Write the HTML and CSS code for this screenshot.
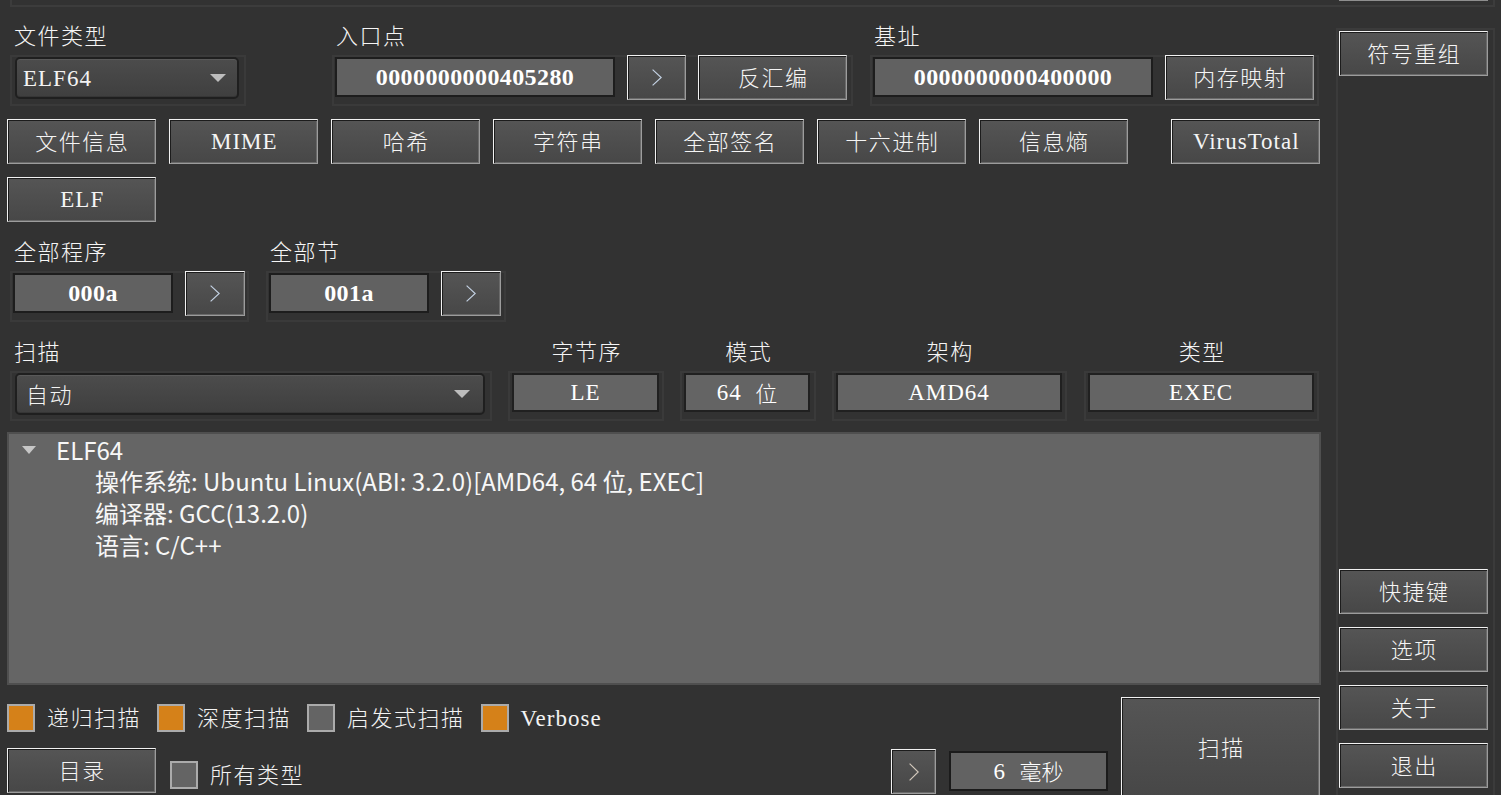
FILE: index.html
```html
<!DOCTYPE html>
<html lang="zh-CN">
<head>
<meta charset="utf-8">
<title>Detect It Easy</title>
<link rel="stylesheet" href="styles.css">
</head>
<body>
<div class="app">
  <div class="topstrip"><div class="topstrip-btn"></div></div>
  <div class="content">
    <div class="main">
      <!-- Row A -->
      <div class="row row-a">
        <div class="group g-type">
          <div class="label">文件类型</div>
          <div class="frame pad3">
            <div class="combo w224">
              <span class="lat">ELF64</span>
              <svg class="combo-arrow" width="16" height="8" viewBox="0 0 16 8"><polygon points="0,0 16,0 8,8" fill="#bdbdbd"/></svg>
            </div>
          </div>
        </div>
        <div class="group g-entry">
          <div class="label">入口点</div>
          <div class="frame pad1">
            <div class="field hex w280 h40">0000000000405280</div>
            <div class="btn w59 up">
              <svg class="chev" width="10" height="17" viewBox="0 0 10 17"><polyline points="0.6,0.6 9.2,8.5 0.6,16.4" fill="none" stroke="#c4d2e4" stroke-width="1.2"/></svg>
            </div>
            <div class="btn up">反汇编</div>
          </div>
        </div>
        <div class="group g-base">
          <div class="label">基址</div>
          <div class="frame pad1">
            <div class="field hex w280 h40">0000000000400000</div>
            <div class="btn up">内存映射</div>
          </div>
        </div>
      </div>

      <!-- Row B -->
      <div class="row row-b">
        <div class="btn">文件信息</div>
        <div class="btn"><span class="lat">MIME</span></div>
        <div class="btn">哈希</div>
        <div class="btn">字符串</div>
        <div class="btn">全部签名</div>
        <div class="btn">十六进制</div>
        <div class="btn">信息熵</div>
        <div class="btn vt"><span class="lat">VirusTotal</span></div>
      </div>

      <!-- Row C -->
      <div class="row row-c">
        <div class="btn"><span class="lat">ELF</span></div>
      </div>

      <!-- Row D -->
      <div class="row row-d">
        <div class="group g-prog">
          <div class="label">全部程序</div>
          <div class="frame pad1">
            <div class="field hex w160 h40">000a</div>
            <div class="btn w60 up">
              <svg class="chev" width="10" height="17" viewBox="0 0 10 17"><polyline points="0.6,0.6 9.2,8.5 0.6,16.4" fill="none" stroke="#c4d2e4" stroke-width="1.2"/></svg>
            </div>
          </div>
        </div>
        <div class="group g-sect">
          <div class="label">全部节</div>
          <div class="frame pad1">
            <div class="field hex w160 h40">001a</div>
            <div class="btn w60 up">
              <svg class="chev" width="10" height="17" viewBox="0 0 10 17"><polyline points="0.6,0.6 9.2,8.5 0.6,16.4" fill="none" stroke="#c4d2e4" stroke-width="1.2"/></svg>
            </div>
          </div>
        </div>
      </div>

      <!-- Row E -->
      <div class="row row-e">
        <div class="group g-scan">
          <div class="label">扫描</div>
          <div class="frame f50 pad3">
            <div class="combo w470">
              <span class="cjk">自动</span>
              <svg class="combo-arrow" width="16" height="8" viewBox="0 0 16 8"><polygon points="0,0 16,0 8,8" fill="#bdbdbd"/></svg>
            </div>
          </div>
        </div>
        <div class="group g-le">
          <div class="label center">字节序</div>
          <div class="frame f50 pad2"><div class="field plain w147 h39"><span class="lat">LE</span></div></div>
        </div>
        <div class="group g-mode">
          <div class="label center">模式</div>
          <div class="frame f50 pad2"><div class="field plain w126 h39"><span class="lat">64  </span>位</div></div>
        </div>
        <div class="group g-arch">
          <div class="label center">架构</div>
          <div class="frame f50 pad2"><div class="field plain w226 h39"><span class="lat">AMD64</span></div></div>
        </div>
        <div class="group g-kind">
          <div class="label center">类型</div>
          <div class="frame f50 pad2"><div class="field plain w226 h39"><span class="lat">EXEC</span></div></div>
        </div>
      </div>

      <!-- Tree -->
      <div class="tree">
        <div class="tree-line root">
          <svg class="tree-arrow" width="14" height="8" viewBox="0 0 14 8"><polygon points="0,0 14,0 7,8" fill="#c6c6c6"/></svg>
          <span>ELF64</span>
        </div>
        <div class="tree-line child">操作系统: Ubuntu Linux(ABI: 3.2.0)[AMD64, 64 位, EXEC]</div>
        <div class="tree-line child">编译器: GCC(13.2.0)</div>
        <div class="tree-line child">语言: C/C++</div>
      </div>

      <!-- Bottom -->
      <div class="bottom">
        <div class="bottom-left">
          <div class="checks">
            <div class="check"><span class="box on"></span><span class="ck-label">递归扫描</span></div>
            <div class="check"><span class="box on"></span><span class="ck-label">深度扫描</span></div>
            <div class="check"><span class="box"></span><span class="ck-label">启发式扫描</span></div>
            <div class="check"><span class="box on"></span><span class="ck-label"><span class="lat">Verbose</span></span></div>
          </div>
          <div class="bottom-row">
            <div class="btn">目录</div>
            <div class="check all"><span class="box"></span><span class="ck-label">所有类型</span></div>
            <div class="btn w45 more">
              <svg class="chev" width="10" height="18" viewBox="0 0 10 18"><polyline points="0.6,0.6 9.2,9 0.6,17.4" fill="none" stroke="#d2c8bc" stroke-width="1.2"/></svg>
            </div>
            <div class="field plain w159 h40 time"><span class="lat">6  </span>毫秒</div>
          </div>
        </div>
        <div class="btn scan">扫描</div>
      </div>
    </div>

    <div class="side">
      <div class="btn">符号重组</div>
      <div class="spacer"></div>
      <div class="btn">快捷键</div>
      <div class="btn">选项</div>
      <div class="btn">关于</div>
      <div class="btn">退出</div>
    </div>
  </div>
</div>
</body>
</html>
```

FILE: styles.css
```css
* { box-sizing: border-box; }

html, body {
  margin: 0;
  padding: 0;
}

body {
  width: 1501px;
  height: 795px;
  overflow: hidden;
  background: #323232;
  color: #f3f3f3;
  font-family: "Noto Sans CJK SC", "Noto Sans", sans-serif;
  font-size: 22px;
  font-weight: 300;
}

.app {
  width: 1501px;
  height: 795px;
  overflow: hidden;
}

/* top strip (scrolled frame) */
.topstrip {
  margin-left: 10px;
  width: 1485px;
  height: 7px;
  border: 2px solid #3c3c3c;
  border-top: 0;
  display: flex;
  justify-content: flex-end;
  padding-right: 5px;
}

.topstrip-btn {
  width: 149px;
  height: 1px;
  background: #8e8e8e;
}

.content {
  display: flex;
}

.main {
  width: 1314px;
  margin-left: 7px;
}

/* generic */
.row { display: flex; }

.lat {
  font-family: "Liberation Serif", serif;
  font-size: 23px;
  font-weight: normal;
  letter-spacing: 1px;
  white-space: pre;
}

.cjk { letter-spacing: 1.5px; }

.label {
  height: 30px;
  line-height: 26px;
  padding-left: 4px;
  margin-bottom: 4px;
  white-space: nowrap;
  letter-spacing: 1.5px;
  color: #f5f5f5;
}

.label.center {
  padding-left: 1.5px;
  text-align: center;
}

.frame {
  display: flex;
  align-items: flex-start;
  gap: 12px;
  height: 51px;
  border: 2px solid #3a3a3a;
}

.frame.f50 { height: 50px; }
.pad1 { padding-left: 1px; }
.pad2 { padding-left: 2px; }
.pad3 { padding-left: 3px; }

/* buttons */
.btn {
  flex-shrink: 0;
  display: flex;
  align-items: center;
  justify-content: center;
  width: 149px;
  height: 45px;
  padding-left: 1.5px;
  padding-bottom: 3px;
  background: linear-gradient(#555555, #474747);
  border: 1px solid;
  border-color: #f2f2f2 #9c9c9c #9c9c9c #f2f2f2;
  box-shadow: inset 1px 1px 0 #1c1c1c, inset -1px -1px 0 #6a6a6a;
  color: #f5f5f5;
  letter-spacing: 1.5px;
  white-space: nowrap;
}

.btn .lat { letter-spacing: 1px; padding-top: 3px; }

.btn.up { margin-top: -2px; }
.btn.w59 { width: 59px; padding: 0; }
.btn.w60 { width: 60px; padding: 0; }
.btn.w45 { width: 45px; padding: 0; }

.chev { display: block; }

/* fields */
.field {
  flex-shrink: 0;
  display: flex;
  align-items: center;
  justify-content: center;
  background: #616161;
  border: 2px solid #1d1d1d;
  color: #ffffff;
  white-space: nowrap;
}

.field.hex {
  font-family: "Liberation Serif", serif;
  font-weight: bold;
  font-size: 24px;
  letter-spacing: 0.4px;
}

.field.plain {
  background: #646464;
  border-color: #202020;
  padding-bottom: 2px;
}

.field.plain .lat { padding-top: 3px; }

.w280 { width: 280px; }
.w160 { width: 160px; }
.w147 { width: 147px; }
.w126 { width: 126px; }
.w226 { width: 226px; }
.w159 { width: 159px; }
.h40 { height: 40px; }
.h39 { height: 39px; }

/* combos */
.combo {
  flex-shrink: 0;
  display: flex;
  align-items: center;
  justify-content: space-between;
  height: 42px;
  padding: 0 11px 0 6px;
  border: 2px solid #1f1f1f;
  border-radius: 5px;
  background: linear-gradient(#4c4c4c, #3f3f3f);
  box-shadow: inset 0 1px 0 #595959, inset 0 -1px 0 #363636;
  color: #f3f3f3;
}

.combo .lat { margin-top: 2px; }
.combo .cjk { margin-bottom: 2px; }

.combo.w224 { width: 224px; }
.combo.w470 { width: 470px; padding-left: 9px; padding-right: 13px; }
.combo-arrow { display: block; }

/* row A */
.row-a { margin-top: 14px; margin-left: 3px; }
.g-type { width: 236px; }
.g-entry { width: 521px; margin-left: 86px; }
.g-base { width: 449px; margin-left: 17px; }

/* row B / C */
.row-b { margin-top: 13px; gap: 13px; }
.row-b .vt { margin-left: 30px; }
.row-c { margin-top: 13px; }

/* row D */
.row-d { margin-top: 15px; margin-left: 3px; }
.g-prog { width: 239px; }
.g-sect { width: 240px; margin-left: 17px; }

/* row E */
.row-e { margin-top: 15px; margin-left: 3px; }
.g-scan { width: 482px; }
.g-le { width: 156px; margin-left: 16px; }
.g-mode { width: 136px; margin-left: 16px; }
.g-arch { width: 235px; margin-left: 16px; }
.g-kind { width: 235px; margin-left: 17px; }

/* tree */
.tree {
  margin-top: 11px;
  width: 1314px;
  height: 253px;
  background: #656565;
  border: 2px solid #4f4f4f;
  padding-top: 0;
  font-size: 24px;
  font-weight: normal;
  color: #f7f7f7;
}

.tree-line {
  height: 32px;
  line-height: 32px;
  white-space: nowrap;
}

.tree-line.root {
  display: flex;
  align-items: center;
  padding-left: 13px;
  height: 31px;
}

.tree-arrow {
  display: block;
  margin-right: 20px;
  margin-top: 1px;
}

.tree-line.child { padding-left: 86px; }

/* bottom */
.bottom {
  display: flex;
  width: 1314px;
}

.bottom-left {
  width: 1114px;
  padding-top: 19px;
}

.checks {
  display: flex;
  align-items: center;
  height: 28px;
}

.check {
  display: flex;
  align-items: center;
  gap: 12px;
  margin-right: 16px;
}

.box {
  display: block;
  width: 28px;
  height: 28px;
  border: 2px solid #ababab;
  background: #646464;
}

.box.on { background: #d58119; }

.ck-label {
  letter-spacing: 1.5px;
  white-space: nowrap;
  color: #f3f3f3;
  padding-bottom: 4px;
}

.ck-label .lat { display: inline-block; padding-top: 3px; }

.bottom-row {
  display: flex;
  align-items: flex-start;
  margin-top: 16px;
}

.check.all {
  margin-left: 14px;
  margin-top: 9px;
}

.btn.more {
  margin-left: auto;
  margin-top: 1px;
}

.field.time {
  margin-left: 13px;
  margin-top: 3px;
  margin-right: 13px;
  background: #626262;
  border-color: #1b1b1b;
}

.btn.scan {
  width: 199px;
  height: 100px;
  margin-top: 12px;
}

/* side column */
.side {
  width: 159px;
  height: 775px;
  margin-left: 15px;
  margin-top: 21px;
  border: 2px solid #3b3b3b;
  padding: 1px 1px 13px 1px;
  display: flex;
  flex-direction: column;
  gap: 13px;
}

.side .spacer { flex: 1; }
```
